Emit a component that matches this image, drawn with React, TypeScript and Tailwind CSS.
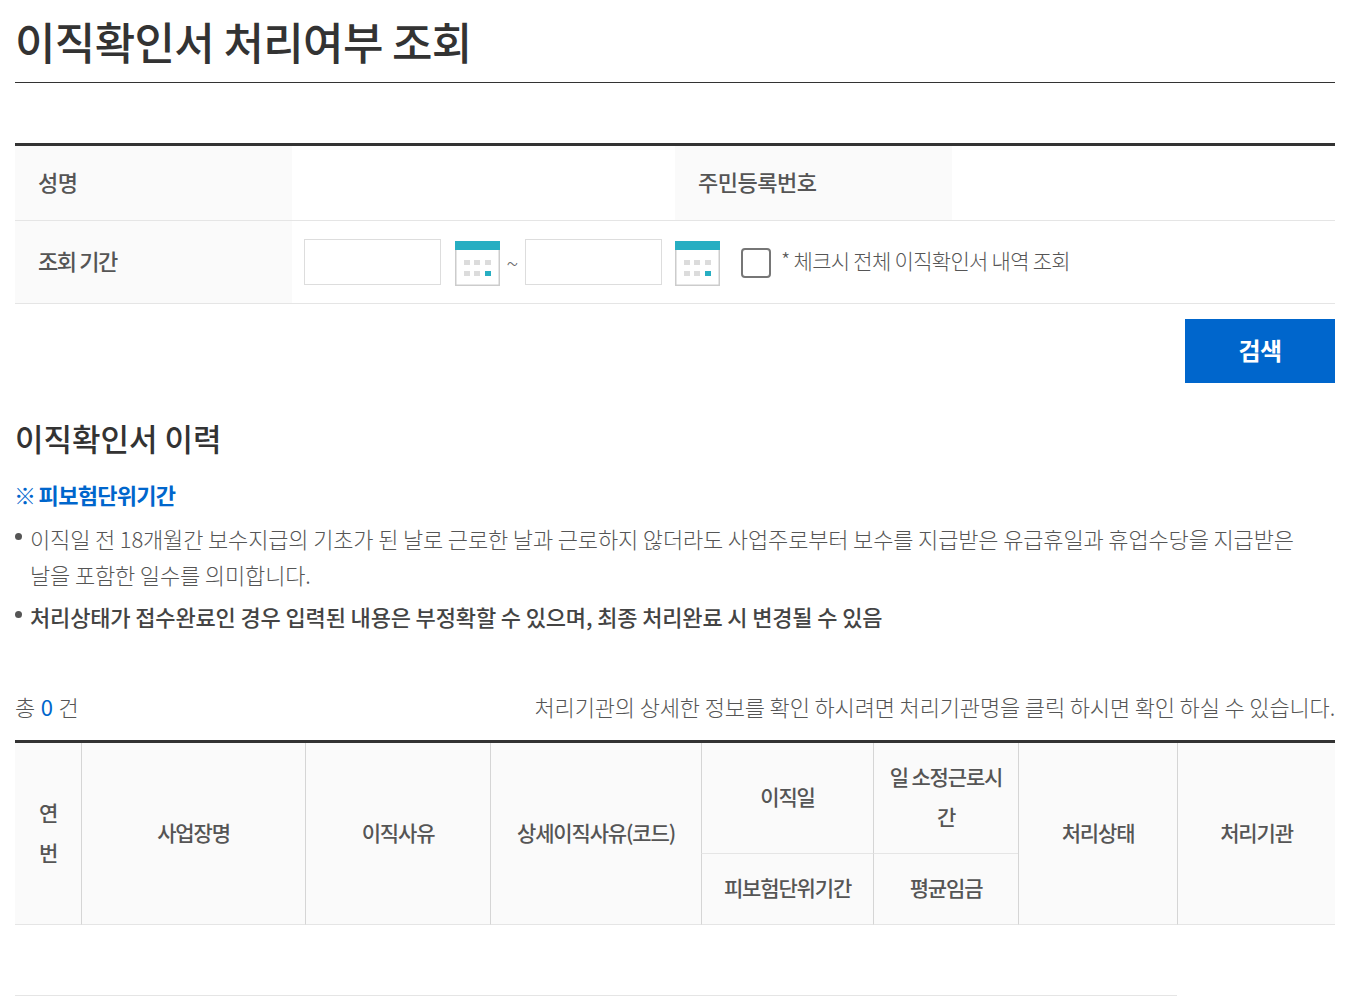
const font = "[font-family:'Noto_Sans_CJK_KR','Noto_Sans',sans-serif]";

function CalendarIcon() {
  return (
    <svg width="45" height="45" viewBox="0 0 45 45" className="shrink-0">
      <rect x="0.75" y="0.75" width="43.5" height="43.5" fill="#fff" stroke="#cccccc" strokeWidth="1.5" />
      <rect x="0" y="0" width="45" height="9" fill="#27aec2" />
      <rect x="9" y="19" width="6" height="5" fill="#dcdcdc" />
      <rect x="19" y="19" width="6" height="5" fill="#dcdcdc" />
      <rect x="30" y="19" width="6" height="5" fill="#dcdcdc" />
      <rect x="9" y="30" width="6" height="5" fill="#dcdcdc" />
      <rect x="19" y="30" width="6" height="5" fill="#dcdcdc" />
      <rect x="30" y="30" width="6" height="5" fill="#27aec2" />
    </svg>
  );
}

function Bullet() {
  return <span className="absolute left-0 top-[13px] w-[7px] h-[7px] rounded-full bg-[#555555]" />;
}

const th = "border-l border-[#d5d5d5] border-b border-b-[#e5e5e5] font-medium text-[21px] text-[#555555] tracking-[-1.15px] leading-[40px] align-middle";
const label = "w-[277px] bg-[#fafafa] pl-[23px] pb-[4px] flex items-center text-[22px] font-medium text-[#555555]";

export default function App() {
  return (
    <div className={`${font} bg-white w-[1369px] h-[998px] overflow-hidden pl-[15px] pr-[34px] text-[#666666]`}>
      <h1 className="h-[83px] border-b border-[#333333] text-[44px] font-medium leading-[82px] text-[#333333] tracking-[-0.65px]">
        이직확인서 처리여부 조회
      </h1>

      <div className="mt-[60px] border-t-[3px] border-[#333333]">
        <div className="flex h-[75px] border-b border-[#e5e5e5]">
          <div className={`${label} tracking-[-0.5px]`}>성명</div>
          <div className="w-[383px]" />
          <div className={`${label} tracking-[-0.5px]`}>주민등록번호</div>
        </div>
        <div className="flex h-[83px] border-b border-[#e5e5e5]">
          <div className={`${label} tracking-[-1.4px]`}>조회 기간</div>
          <div className="flex items-center pl-[12px] pb-[1px]">
            <input className="w-[137px] h-[46px] border border-[#dddddd] bg-white" />
            <div className="ml-[14px] mt-[3px]"><CalendarIcon /></div>
            <span className="w-[25px] text-center text-[22px] font-light leading-none">~</span>
            <input className="w-[137px] h-[46px] border border-[#dddddd] bg-white" />
            <div className="ml-[13px] mt-[3px]"><CalendarIcon /></div>
            <span className="ml-[21px] w-[30px] h-[30px] mt-[3px] border-2 border-[#767676] rounded-[4px] bg-white" />
            <span className="ml-[10px] pb-[2px] text-[21px] font-light tracking-[-0.7px] text-[#555555]">* 체크시 전체 이직확인서 내역 조회</span>
          </div>
        </div>
      </div>

      <div className="flex justify-end mt-[15px]">
        <button className="w-[150px] h-[64px] pb-[2px] bg-[#0066cc] text-white text-[24px] font-bold tracking-[-0.5px]">검색</button>
      </div>

      <h2 className="mt-[32px] text-[31px] leading-[46px] font-medium text-[#333333]">이직확인서 이력</h2>

      <p className="mt-[18px] text-[22px] leading-[30px] font-bold text-[#0066cc] tracking-[-0.7px] [word-spacing:-1px] -ml-[1px]">※ 피보험단위기간</p>

      <ul className="mt-[11px] text-[22px] leading-[36px] font-light text-[#555555] tracking-[-0.15px] break-keep">
        <li className="relative pl-[15px]">
          <Bullet />
          이직일 전 18개월간 보수지급의 기초가 된 날로 근로한 날과 근로하지 않더라도 사업주로부터 보수를 지급받은 유급휴일과 휴업수당을 지급받은 날을 포함한 일수를 의미합니다.
        </li>
        <li className="relative pl-[15px] mt-[6px] font-medium text-[#444444] tracking-[-0.15px]">
          <Bullet />
          처리상태가 접수완료인 경우 입력된 내용은 부정확할 수 있으며, 최종 처리완료 시 변경될 수 있음
        </li>
      </ul>

      <div className="flex justify-between items-center mt-[55px] h-[36px] pb-[2px] text-[22px] font-light tracking-[-0.15px] text-[#555555]">
        <span className="[word-spacing:1px]">총 <span className="font-normal text-[#0066cc]">0</span> 건</span>
        <span>처리기관의 상세한 정보를 확인 하시려면 처리기관명을 클릭 하시면 확인 하실 수 있습니다.</span>
      </div>

      <table className="mt-[15px] w-[1320px] table-fixed border-t-[3px] border-[#333333] border-separate border-spacing-0 text-center">
        <colgroup>
          <col className="w-[66px]" />
          <col className="w-[224px]" />
          <col className="w-[185px]" />
          <col className="w-[211px]" />
          <col className="w-[172px]" />
          <col className="w-[145px]" />
          <col className="w-[159px]" />
          <col className="w-[158px]" />
        </colgroup>
        <thead className="bg-[#fafafa]">
          <tr className="h-[111px]">
            <th rowSpan={2} className={`${th} border-l-0 px-[20px] pb-[3px]`}>연번</th>
            <th rowSpan={2} className={`${th} pb-[3px]`}>사업장명</th>
            <th rowSpan={2} className={`${th} pb-[3px]`}>이직사유</th>
            <th rowSpan={2} className={`${th} pb-[3px]`}>상세이직사유(코드)</th>
            <th className={`${th} pb-[5px]`}>이직일</th>
            <th className={`${th} px-[14px] pb-[5px] [word-break:break-all]`}>일 소정근로시간</th>
            <th rowSpan={2} className={`${th} pb-[3px]`}>처리상태</th>
            <th rowSpan={2} className={`${th} pb-[3px]`}>처리기관</th>
          </tr>
          <tr className="h-[71px]">
            <th className={`${th} pb-[5px]`}>피보험단위기간</th>
            <th className={`${th} pb-[5px]`}>평균임금</th>
          </tr>
        </thead>
      </table>

      <div className="mt-[70px] w-[1162px] border-b border-[#e5e5e5]" />
    </div>
  );
}
